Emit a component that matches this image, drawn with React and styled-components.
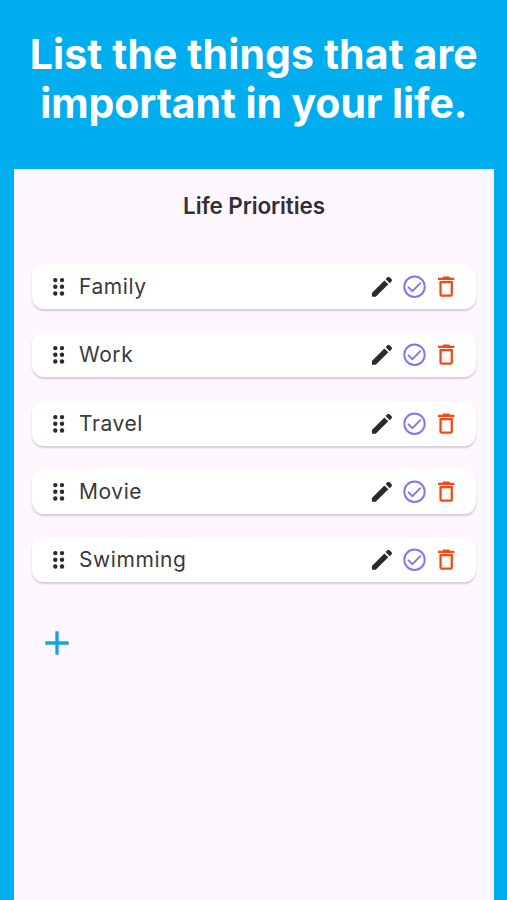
import React from 'react';
import styled, { createGlobalStyle } from 'styled-components';

const colors = {
  sky: '#00adee',
  surface: '#fef7ff',
  card: '#ffffff',
  text: '#3a393c',
  title: '#323035',
  icon: '#2b2a2c',
  check: '#7d79ee',
  danger: '#fc4610',
  add: '#12a5e6',
};

const GlobalStyle = createGlobalStyle`
  * {
    box-sizing: border-box;
  }

  body {
    margin: 0;
    background: ${colors.sky};
    font-family: Inter, 'Liberation Sans', sans-serif;
  }
`;

const Page = styled.div`
  display: flex;
  flex-direction: column;
  height: 100vh;
  padding: 30px 13px 0 13.5px;
  overflow: hidden;
  background: ${colors.sky};
`;

const Headline = styled.h1`
  height: 139px;
  flex-shrink: 0;
  margin: 0 -13px;
  color: #fff;
  font-size: 41px;
  font-weight: 700;
  line-height: 49px;
  text-align: center;
  white-space: nowrap;
`;

const HeadlineLine = styled.span`
  display: block;
  letter-spacing: ${({ $tracking }) => $tracking}px;
`;

const Panel = styled.main`
  flex: 1;
  padding: 21px 18px 0 18.5px;
  background: ${colors.surface};
`;

const Title = styled.h2`
  margin: 0 0 42px;
  color: ${colors.title};
  font-size: 22.5px;
  font-weight: 600;
  line-height: 32px;
  letter-spacing: -0.12px;
  text-align: center;
`;

const List = styled.ul`
  display: flex;
  flex-direction: column;
  gap: 23.25px;
  margin: 0;
  padding: 0;
  list-style: none;
`;

const Card = styled.li`
  display: flex;
  align-items: center;
  height: 45px;
  padding: 0 16.5px 0 21px;
  border-radius: 12px;
  background: ${colors.card};
  box-shadow: 0 1.5px 2px rgba(60, 50, 65, 0.22);
`;

const Label = styled.span`
  flex: 1;
  margin-left: 13px;
  padding-top: 1px;
  color: ${colors.text};
  font-size: 21px;
  letter-spacing: 0.57px;
  line-height: 28px;
`;

const Actions = styled.div`
  display: flex;
  align-items: center;
  gap: 5px;
`;

const Icon = styled.svg`
  display: block;
  width: ${({ $width }) => $width || 27}px;
  height: 27px;
  flex-shrink: 0;
  color: ${({ $color }) => $color};
  fill: currentColor;
`;

const AddButton = styled.button`
  display: block;
  margin: 41px 0 0 5px;
  padding: 0;
  border: 0;
  background: none;

  svg {
    width: 40px;
    height: 40px;
  }
`;

const DragIcon = () => (
  <Icon $width={13} $color={colors.icon} viewBox="0 0 13 27">
    {[7.1, 13.8, 20.5].map((y) => (
      <React.Fragment key={y}>
        <circle cx="2.3" cy={y} r="2.2" />
        <circle cx="9" cy={y} r="2.2" />
      </React.Fragment>
    ))}
  </Icon>
);

const EditIcon = () => (
  <Icon $color={colors.icon} viewBox="0.4 -0.2 24 24">
    <path d="M3 17.6V20.400q0 .6.6.6H6.400L17.600 9.900l-3.500-3.500L3 17.600zM20.500 7.200a1.400 1.400 0 0 0 0-1.900l-1.800-1.800a1.400 1.400 0 0 0-1.900 0l-1.700 1.700 3.700 3.700 1.700-1.700z" />
  </Icon>
);

const CheckIcon = () => (
  <Icon $color={colors.check} viewBox="0 -0.2 24 24">
    <g fill="none" stroke="currentColor" strokeWidth="1.7">
      <circle cx="12" cy="12" r="9.1" />
      <path d="M6.300 12.100l3.800 3.800 7.500-7.500" />
    </g>
  </Icon>
);

const DeleteIcon = () => (
  <Icon $color={colors.danger} viewBox="0.300 -0.2 24 24">
    <path d="M6 19c0 1.1.9 2 2 2h8c1.100 0 2-.9 2-2V7H6v12zM8 9h8v10H8V9zm7.500-5l-1-1h-5l-1 1H4.700v2h14.600V4z" />
  </Icon>
);

const AddIcon = () => (
  <Icon $color={colors.add} viewBox="0 0 24 24">
    <path d="M19 13h-6v6h-2v-6H5v-2h6V5h2v6h6v2z" />
  </Icon>
);

const priorities = ['Family', 'Work', 'Travel', 'Movie', 'Swimming'];

function PriorityCard({ name }) {
  return (
    <Card>
      <DragIcon />
      <Label>{name}</Label>
      <Actions>
        <EditIcon />
        <CheckIcon />
        <DeleteIcon />
      </Actions>
    </Card>
  );
}

function App() {
  return (
    <>
      <GlobalStyle />
      <Page>
        <Headline>
          <HeadlineLine $tracking={0.1}>List the things that are</HeadlineLine>
          <HeadlineLine $tracking={-0.1}>important in your life.</HeadlineLine>
        </Headline>
        <Panel>
          <Title>Life Priorities</Title>
          <List>
            {priorities.map((name) => (
              <PriorityCard key={name} name={name} />
            ))}
          </List>
          <AddButton aria-label="Add priority">
            <AddIcon />
          </AddButton>
        </Panel>
      </Page>
    </>
  );
}

export default App;
